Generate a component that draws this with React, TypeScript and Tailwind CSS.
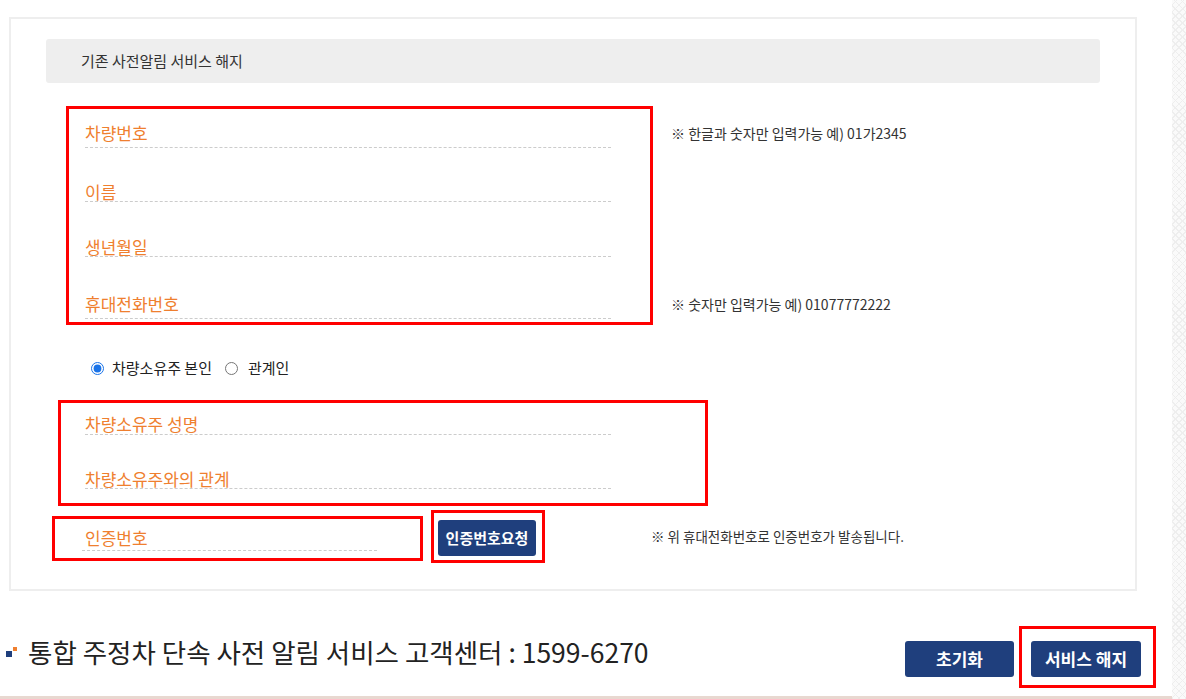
import React from 'react';

function Field({ label, className }: { label: string; className: string }) {
  return (
    <div className={`w-[526px] border-b border-dashed border-[#cccccc] text-[17px] leading-[20px] text-[#ef7f2f] ${className}`}>
      {label}
    </div>
  );
}

export default function App() {
  return (
    <div className="w-[1186px] h-[699px] overflow-hidden bg-white flex font-['Noto_Sans_CJK_KR',sans-serif] text-[#333333]">
      <div className="w-[1172px] flex flex-col">
        {/* main form box */}
        <div className="ml-[9px] mt-[17px] w-[1128px] h-[574px] border-2 border-[#eeeeee] flex flex-col">
          <div className="ml-[35px] mt-[20px] w-[1054px] h-[44px] bg-[#eeeeee] rounded-[3px] flex items-center pl-[35px] text-[15px] text-[#333333]">
            기존 사전알림 서비스 해지
          </div>

          <div className="flex mt-[23px]">
            <div className="ml-[55px] w-[587px] h-[219px] border-[3px] border-[#ff0000] pl-[16px] flex flex-col">
              <Field label="차량번호" className="mt-[14px] pb-[4px]" />
              <Field label="이름" className="mt-[34px] h-[20px]" />
              <Field label="생년월일" className="mt-[35px] h-[20px]" />
              <Field label="휴대전화번호" className="mt-[37px] h-[25px]" />
            </div>
            <div className="ml-[18px] pt-[17px] flex flex-col text-[14px] leading-[20px] text-[#333333]">
              <div>※ 한글과 숫자만 입력가능 예) 01가2345</div>
              <div className="mt-[151px]">※ 숫자만 입력가능 예) 01077772222</div>
            </div>
          </div>

          <div className="ml-[80px] mt-[31px] h-[24px] flex items-center text-[15px] text-[#222222]">
            <input type="radio" name="owner" defaultChecked className="m-0 w-[13px] h-[13px] accent-[#1a73e8]" />
            <span className="ml-[8px]">차량소유주 본인</span>
            <input type="radio" name="owner" className="m-0 ml-[13px] w-[13px] h-[13px]" />
            <span className="ml-[10px]">관계인</span>
          </div>

          <div className="ml-[47px] mt-[20px] w-[650px] h-[106px] border-[3px] border-[#ff0000] pl-[24px] flex flex-col">
            <Field label="차량소유주 성명" className="mt-[11px] h-[21px]" />
            <Field label="차량소유주와의 관계" className="mt-[34px] h-[20px]" />
          </div>

          <div className="flex items-start mt-[4px]">
            <div className="ml-[41px] mt-[6px] w-[371px] h-[45px] border-[3px] border-[#ff0000] flex flex-col">
              <div className="ml-[27px] mt-[9px] w-[295px] h-[23px] border-b border-dashed border-[#cccccc] pl-[3px] text-[17px] leading-[20px] text-[#ef7f2f]">
                인증번호
              </div>
            </div>
            <div className="ml-[8px] w-[114px] h-[53px] border-[3px] border-[#ff0000] pl-[4px] pt-[7px]">
              <button className="w-[98px] h-[36px] rounded-[3px] bg-[#1f3f7d] text-white text-[15px] font-bold">
                인증번호요청
              </button>
            </div>
            <div className="ml-[106px] mt-[16px] text-[13.5px] leading-[20px] text-[#333333]">
              ※ 위 휴대전화번호로 인증번호가 발송됩니다.
            </div>
          </div>
        </div>

        {/* footer */}
        <div className="h-[105px] flex items-start">
          <div className="ml-[6px] mt-[44px] flex items-center">
            <div className="relative w-[12px] h-[12px]">
              <div className="absolute left-0 bottom-[1px] w-[6px] h-[6px] bg-[#1f3f7d]" />
              <div className="absolute left-[7px] top-[1px] w-[4px] h-[4px] bg-[#ef7f2f]" />
            </div>
            <div className="ml-[10px] text-[26.5px] leading-[34px] text-[#222222]">
              통합 주정차 단속 사전 알림 서비스 고객센터 : 1599-6270
            </div>
          </div>
          <div className="ml-auto mr-[16px] mt-[35px] flex items-start">
            <button className="mt-[15px] w-[109px] h-[36px] rounded-[3px] bg-[#1f3f7d] text-white text-[17px] font-bold">
              초기화
            </button>
            <div className="ml-[5px] w-[137px] h-[62px] border-[3px] border-[#ff0000] pl-[9px] pt-[12px]">
              <button className="w-[110px] h-[36px] rounded-[3px] bg-[#1f3f7d] text-white text-[17px] font-bold">
                서비스 해지
              </button>
            </div>
          </div>
        </div>
        <div className="h-[3px] bg-[#e8d8d0]" />
      </div>
      <div className="flex-1 bg-[#fafafa] bg-[repeating-linear-gradient(45deg,#eeeeee_0px,#eeeeee_1px,transparent_1px,transparent_5px),repeating-linear-gradient(-45deg,#eeeeee_0px,#eeeeee_1px,transparent_1px,transparent_5px)]" />
    </div>
  );
}
